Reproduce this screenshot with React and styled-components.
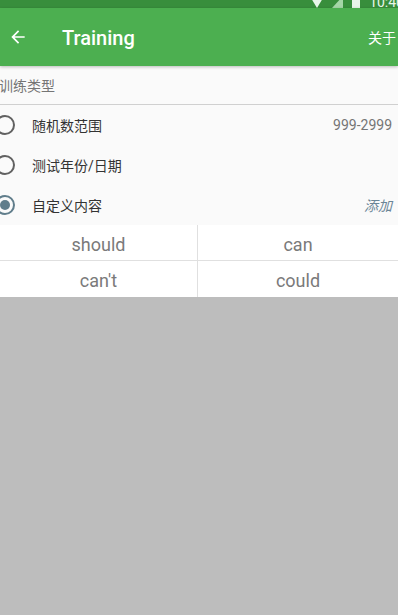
import React from "react";
import styled, { createGlobalStyle } from "styled-components";

const GlobalStyle = createGlobalStyle`
  html, body {
    margin: 0;
    padding: 0;
    background: #bdbdbd;
    font-family: Roboto, "Noto Sans CJK SC", sans-serif;
  }
  #root {
    min-height: 615px;
    overflow: hidden;
  }
`;

const StatusBar = styled.div`
  height: 8px;
  background: #388e3c;
  display: flex;
  justify-content: flex-end;
  align-items: flex-end;
  gap: 9px;
  overflow: hidden;
  color: #e8f5e9;
`;

const StatusIcon = styled.svg`
  display: block;
  flex-shrink: 0;
`;

const Clock = styled.span`
  display: block;
  font-size: 14px;
  line-height: 12px;
  height: 12px;
  margin-right: -6px;
`;

const AppBar = styled.header`
  height: 58px;
  background: #4caf50;
  display: flex;
  align-items: center;
  padding: 0 2px 0 7px;
  color: #fff;
  box-shadow: 0 1px 3px rgba(0, 0, 0, 0.25);
  position: relative;
`;

const BackButton = styled.div`
  width: 22px;
  height: 22px;
  display: flex;
  align-items: center;
  justify-content: center;
`;

const Title = styled.h1`
  margin: 2px 0 0 33px;
  font-size: 20px;
  font-weight: 500;
  flex: 1;
`;

const Action = styled.span`
  font-size: 14px;
`;

const Body = styled.div`
  background: #fafafa;
`;

const SectionHeader = styled.div`
  height: 38px;
  display: flex;
  align-items: center;
  font-size: 14px;
  color: #757575;
  margin-left: -1px;
  border-bottom: 1.5px solid #d0d0d0;
`;

const Row = styled.div`
  height: 40px;
  display: flex;
  align-items: center;
  padding-right: 6px;
`;

const Radio = styled.span`
  width: 20px;
  height: 20px;
  box-sizing: border-box;
  border-radius: 50%;
  border: 2px solid ${(p) => (p.checked ? "#607d8b" : "#616161")};
  margin-left: -5px;
  display: flex;
  align-items: center;
  justify-content: center;
  flex-shrink: 0;
  &::after {
    content: "";
    display: ${(p) => (p.checked ? "block" : "none")};
    width: 10px;
    height: 10px;
    border-radius: 50%;
    background: #607d8b;
  }
`;

const RowLabel = styled.span`
  margin-left: 17px;
  font-size: 14px;
  color: #333;
  flex: 1;
`;

const RowValue = styled.span`
  font-size: 14px;
  color: ${(p) => (p.italic ? "#6b8596" : "#757575")};
  font-style: ${(p) => (p.italic ? "italic" : "normal")};
`;

const Grid = styled.div`
  display: grid;
  grid-template-columns: 198px 1fr;
  background: #fff;
`;

const Cell = styled.div`
  height: 36px;
  box-sizing: border-box;
  padding-top: 3px;
  display: flex;
  align-items: center;
  justify-content: center;
  font-size: 18px;
  color: #7a7a7a;
  border-right: ${(p) => (p.left ? "1.5px solid #e0e0e0" : "none")};
  border-bottom: ${(p) => (p.top ? "1.5px solid #e0e0e0" : "none")};
`;

const options = [
  { label: "随机数范围", value: "999-2999" },
  { label: "测试年份/日期" },
  { label: "自定义内容", value: "添加", italic: true, checked: true },
];

const words = ["should", "can", "can't", "could"];

export default function App() {
  return (
    <>
      <GlobalStyle />
      <StatusBar>
        <StatusIcon width="12" height="12" viewBox="0 0 12 12">
          <path d="M0 2 Q6 -2 12 2 L6 12 Z" fill="#e8f5e9" />
        </StatusIcon>
        <StatusIcon width="11" height="12" viewBox="0 0 11 12">
          <path d="M11 0 L11 12 L0 12 Z" fill="#a5d6a7" />
        </StatusIcon>
        <StatusIcon width="8" height="14" viewBox="0 0 8 14">
          <rect x="0" y="1" width="8" height="13" fill="#e8f5e9" />
        </StatusIcon>
        <Clock>10:40</Clock>
      </StatusBar>
      <AppBar>
        <BackButton>
          <svg width="20" height="20" viewBox="0 0 24 24">
            <path
              d="M20 11H7.83l5.59-5.59L12 4l-8 8 8 8 1.41-1.41L7.83 13H20v-2z"
              fill="#fff"
            />
          </svg>
        </BackButton>
        <Title>Training</Title>
        <Action>关于</Action>
      </AppBar>
      <Body>
        <SectionHeader>训练类型</SectionHeader>
        {options.map((o) => (
          <Row key={o.label}>
            <Radio checked={o.checked} />
            <RowLabel>{o.label}</RowLabel>
            {o.value && <RowValue italic={o.italic}>{o.value}</RowValue>}
          </Row>
        ))}
      </Body>
      <Grid>
        {words.map((w, i) => (
          <Cell key={w} left={i % 2 === 0} top={i < 2}>
            {w}
          </Cell>
        ))}
      </Grid>
    </>
  );
}
